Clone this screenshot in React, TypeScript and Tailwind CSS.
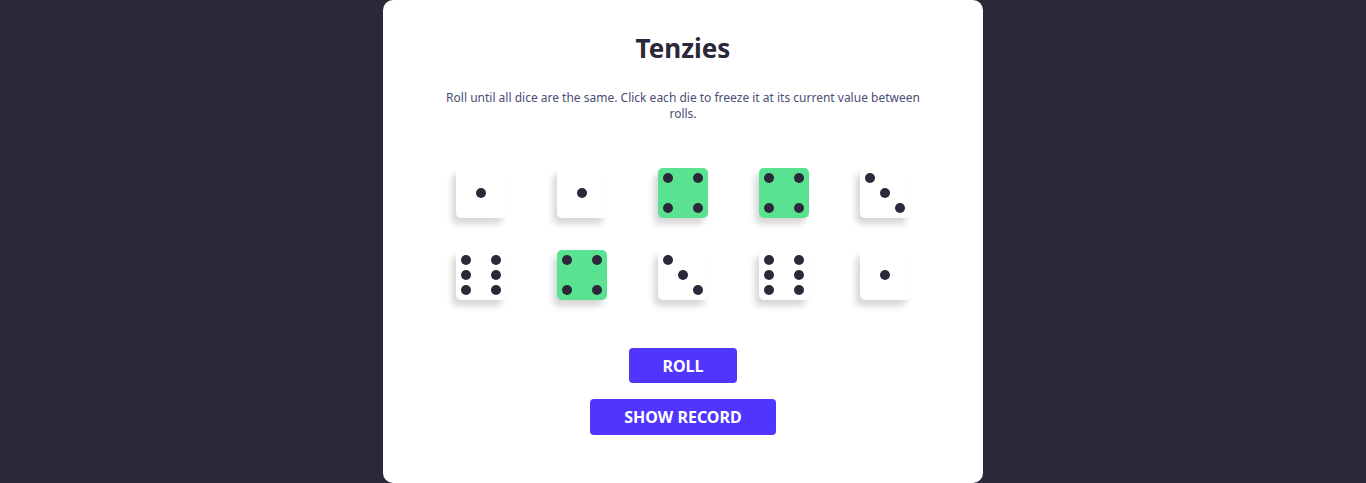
import React from "react";

type DieProps = { value: number; held: boolean };

// dot positions on a 3x3 grid, [col, row]
const faces: Record<number, [number, number][]> = {
  1: [[2, 2]],
  2: [[1, 1], [3, 3]],
  3: [[1, 1], [2, 2], [3, 3]],
  4: [[1, 1], [3, 1], [1, 3], [3, 3]],
  5: [[1, 1], [3, 1], [2, 2], [1, 3], [3, 3]],
  6: [[1, 1], [3, 1], [1, 2], [3, 2], [1, 3], [3, 3]],
};

const colClass = ["", "col-start-1", "col-start-2", "col-start-3"];
const rowClass = ["", "row-start-1", "row-start-2", "row-start-3"];

function Die({ value, held }: DieProps) {
  return (
    <div
      className={`w-[50px] h-[50px] rounded-[5px] grid grid-cols-3 grid-rows-3 p-[2px] shadow-[-4px_6px_6px_rgba(0,0,0,0.16)] ${
        held ? "bg-[#59E391]" : "bg-white"
      }`}
    >
      {faces[value].map(([c, r], i) => (
        <div
          key={i}
          className={`${colClass[c]} ${rowClass[r]} flex items-center justify-center`}
        >
          <span className="w-[10px] h-[10px] rounded-full bg-[#2B283A]" />
        </div>
      ))}
    </div>
  );
}

const dice: DieProps[] = [
  { value: 1, held: false },
  { value: 1, held: false },
  { value: 4, held: true },
  { value: 4, held: true },
  { value: 3, held: false },
  { value: 6, held: false },
  { value: 4, held: true },
  { value: 3, held: false },
  { value: 6, held: false },
  { value: 1, held: false },
];

export default function App() {
  return (
    <div
      className="min-h-[483px] bg-[#2B283A] flex justify-center"
      style={{ fontFamily: '"Noto Sans", "Open Sans", sans-serif' }}
    >
      <main className="w-[600px] h-[483px] bg-white rounded-[10px] flex flex-col items-center pt-[31px]">
        <h1 className="text-[26px] font-bold text-[#2B283A] leading-[34px]">
          Tenzies
        </h1>
        <p className="mt-[25px] w-[480px] text-center text-[12px] leading-[16px] text-[#4A4E74]">
          Roll until all dice are the same. Click each die to freeze it at its
          current value between rolls.
        </p>
        <div className="mt-[46px] grid grid-cols-5 gap-x-[51px] gap-y-[32px]">
          {dice.map((d, i) => (
            <Die key={i} value={d.value} held={d.held} />
          ))}
        </div>
        <button className="mt-[48px] w-[108px] h-[35px] rounded-[4px] bg-[#5035FF] text-white font-bold text-[16px]">
          ROLL
        </button>
        <button className="mt-[16px] w-[186px] h-[36px] rounded-[4px] bg-[#5035FF] text-white font-bold text-[16px]">
          SHOW RECORD
        </button>
      </main>
    </div>
  );
}
